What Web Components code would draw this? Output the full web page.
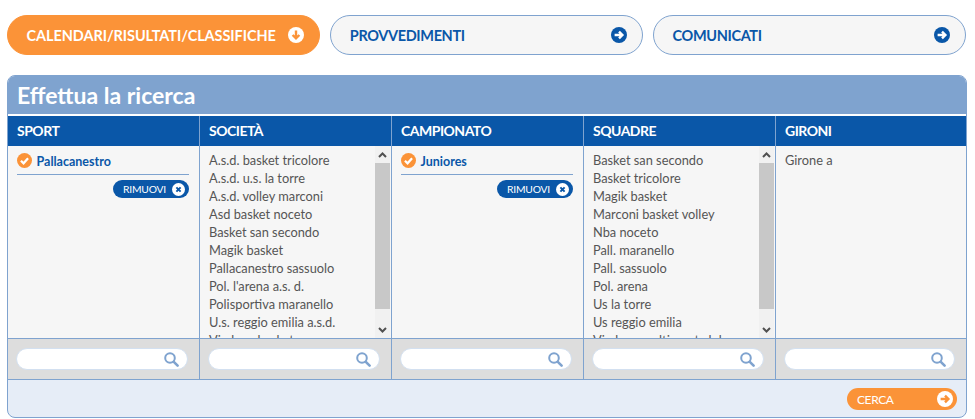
<!DOCTYPE html>
<html lang="it">
<head>
<meta charset="utf-8">
<title>Effettua la ricerca</title>
<style>
	html, body { margin: 0; background: #fff; }
	body { font-family: "Lato", "Open Sans", sans-serif; width: 975px; height: 419px; overflow: hidden; }
</style>
</head>
<body>
	<app-page>
		<nav-pill active label="CALENDARI/RISULTATI/CLASSIFICHE"></nav-pill>
		<nav-pill label="PROVVEDIMENTI"></nav-pill>
		<nav-pill label="COMUNICATI"></nav-pill>

		<search-panel slot="panel" heading="Effettua la ricerca">
			<filter-column label="SPORT">
				<picked-item label="Pallacanestro"></picked-item>
			</filter-column>
			<filter-column label="SOCIETÀ">
				<scroll-list items="A.s.d. basket tricolore|A.s.d. u.s. la torre|A.s.d. volley marconi|Asd basket noceto|Basket san secondo|Magik basket|Pallacanestro sassuolo|Pol. l'arena a.s. d.|Polisportiva maranello|U.s. reggio emilia a.s.d.|Viadana basket"></scroll-list>
			</filter-column>
			<filter-column label="CAMPIONATO">
				<picked-item label="Juniores"></picked-item>
			</filter-column>
			<filter-column label="SQUADRE">
				<scroll-list items="Basket san secondo|Basket tricolore|Magik basket|Marconi basket volley|Nba noceto|Pall. maranello|Pall. sassuolo|Pol. arena|Us la torre|Us reggio emilia|Viadana multisport club"></scroll-list>
			</filter-column>
			<filter-column label="GIRONI">
				<plain-list items="Girone a"></plain-list>
			</filter-column>
		</search-panel>
	</app-page>

<script>
// shared round icons, a disc with the glyph on top in the other colour
const ICONS = {
	down  : '<path d="M8 3.4v8M4.6 8 8 11.4 11.4 8" />',
	right : '<path d="M3.6 8h8M8 4.6 11.4 8 8 11.4" />',
	check : '<path d="M4.2 8.2 7 11l4.8-5.4" />',
	close : '<path d="M5.4 5.4l5.2 5.2M10.6 5.4l-5.2 5.2" />'
}

class RoundIcon extends HTMLElement {
	connectedCallback() {
		const size = this.getAttribute('size') || 16
		const disc = this.getAttribute('disc') || '#fff'
		const mark = this.getAttribute('mark') || '#0a57a8'
		const name = this.getAttribute('name')
		this.attachShadow({ mode: 'open' })
		this.shadowRoot.innerHTML = `
			<style>
				:host { display: block; width: ${size}px; height: ${size}px; flex: none; }
				svg { display: block; }
			</style>
			<svg width="${size}" height="${size}" viewBox="0 0 16 16">
				<circle cx="8" cy="8" r="8" fill="${disc}"/>
				<g fill="none" stroke="${mark}" stroke-width="2.4">${ICONS[name]}</g>
			</svg>
		`
	}
}
customElements.define('round-icon', RoundIcon)

class AppPage extends HTMLElement {
	constructor() {
		super()
		this.attachShadow({ mode: 'open' })
		this.shadowRoot.innerHTML = `
			<style>
				:host { display: block; padding: 15px 8px 0 7px; }
				.nav { display: grid; grid-template-columns: 313px 312.5px 313px; column-gap: 10.25px; margin-bottom: 20px; }
			</style>
			<div class="nav"><slot></slot></div>
			<slot name="panel"></slot>
		`
	}
}
customElements.define('app-page', AppPage)

class NavPill extends HTMLElement {
	connectedCallback() {
		const active = this.hasAttribute('active')
		this.attachShadow({ mode: 'open' })
		this.shadowRoot.innerHTML = `
			<style>
				:host {
					display: flex; align-items: center; justify-content: space-between; box-sizing: border-box;
					height: 40px; border-radius: 20px; padding: 0 15px 0 18.5px;
					border: 1px solid #7fa3cf; background: #f6f6f6; color: #0a57a8;
					font-size: 14.5px; font-weight: 700; letter-spacing: -.35px;
				}
				:host([active]) { background: #fb9338; border-color: #fb9338; color: #fff; letter-spacing: -.08px; }
			</style>
			<span>${this.getAttribute('label')}</span>
			<round-icon name="${active ? 'down' : 'right'}" disc="${active ? '#fff' : '#0a57a8'}" mark="${active ? '#fb9338' : '#fff'}"></round-icon>
		`
	}
}
customElements.define('nav-pill', NavPill)

class SearchPanel extends HTMLElement {
	connectedCallback() {
		this.attachShadow({ mode: 'open' })
		this.shadowRoot.innerHTML = `
			<style>
				:host { display: flex; flex-direction: column; box-sizing: border-box; width: 960px; height: 343px; border: 1px solid #7fa3cf; border-radius: 8px; overflow: hidden; background: #e6edf7; }
				h2 { margin: 0; height: 38px; line-height: 39px; padding-left: 9px; background: #7fa3cf; border-bottom: 2px solid #fff; color: #fff; font-size: 23px; font-weight: 700; }
				.cols { display: grid; grid-template-columns: repeat(4, 192px) 1fr; border-bottom: 1px solid #7fa3cf; }
				.foot { flex: 1; display: flex; align-items: center; justify-content: flex-end; padding: 1px 9px 0 0; }
			</style>
			<h2>${this.getAttribute('heading')}</h2>
			<div class="cols"><slot></slot></div>
			<div class="foot"><cerca-button></cerca-button></div>
		`
	}
}
customElements.define('search-panel', SearchPanel)

class FilterColumn extends HTMLElement {
	connectedCallback() {
		this.attachShadow({ mode: 'open' })
		this.shadowRoot.innerHTML = `
			<style>
				:host { display: flex; flex-direction: column; min-width: 0; border-right: 1px solid #7fa3cf; }
				:host(:last-child) { border-right: 0; }
				.head { height: 30px; line-height: 29px; padding-left: 9px; background: #0a57a8; color: #fff; font-size: 14px; font-weight: 700; letter-spacing: -.5px; }
				.body { height: 192px; background: #f6f6f6; overflow: hidden; }
				.find { height: 41px; box-sizing: border-box; border-top: 1px solid #7fa3cf; background: #ddd; padding: 9px 11px 0 8px; }
			</style>
			<div class="head">${this.getAttribute('label')}</div>
			<div class="body"><slot></slot></div>
			<div class="find"><search-box></search-box></div>
		`
	}
}
customElements.define('filter-column', FilterColumn)

class PickedItem extends HTMLElement {
	connectedCallback() {
		this.attachShadow({ mode: 'open' })
		this.shadowRoot.innerHTML = `
			<style>
				:host { display: block; padding: 7px 10px 0 9px; }
				.row { display: flex; align-items: center; gap: 4.5px; box-sizing: border-box; height: 22px; padding-bottom: 6px; border-bottom: 1px solid #7fa3cf; color: #0a57a8; font-size: 12.5px; font-weight: 700; }
				.row span { padding-top: 2px; }
				.remove { display: flex; justify-content: flex-end; margin-top: 5px; }
				.pill { display: flex; align-items: center; justify-content: space-between; box-sizing: border-box; width: 76px; height: 18px; border-radius: 9px; padding: 0 4px 0 10px; background: #0a57a8; color: #fff; font-size: 10.3px; letter-spacing: -.2px; }
			</style>
			<div class="row">
				<round-icon name="check" size="15" disc="#fb9338" mark="#fff"></round-icon>
				<span>${this.getAttribute('label')}</span>
			</div>
			<div class="remove">
				<div class="pill"><span>RIMUOVI</span><round-icon name="close" size="13" disc="#fff" mark="#0a57a8"></round-icon></div>
			</div>
		`
	}
}
customElements.define('picked-item', PickedItem)

class PlainList extends HTMLElement {
	connectedCallback() {
		const rows = this.getAttribute('items').split('|').map(t => `<li>${t}</li>`).join('')
		this.attachShadow({ mode: 'open' })
		this.shadowRoot.innerHTML = `
			<style>
				:host { display: block; }
				ul { list-style: none; margin: 0; padding: 5px 0 4px 9px; color: #555; font-size: 12.8px; line-height: 18px; }
				li { white-space: nowrap; }
			</style>
			<ul>${rows}</ul>
		`
	}
}
customElements.define('plain-list', PlainList)

// the browser hides real scrollbars when photographing, so this one is drawn
class ListScrollbar extends HTMLElement {
	constructor() {
		super()
		this.attachShadow({ mode: 'open' })
		this.shadowRoot.innerHTML = `
			<style>
				:host { display: flex; flex-direction: column; flex: none; width: 15px; margin-right: 1px; background: #f1f1f1; }
				.btn { height: 17px; display: flex; align-items: center; justify-content: center; }
				.thumb { height: 146px; background: #c8c8c8; }
				.rest { flex: 1; }
				svg { display: block; }
			</style>
			<div class="btn"><svg width="9" height="6"><path d="M1 5l3.500-3.500L8 5" fill="none" stroke="#505050" stroke-width="2"/></svg></div>
			<div class="thumb"></div>
			<div class="rest"></div>
			<div class="btn"><svg width="9" height="6"><path d="M1 1l3.500 3.500L8 1" fill="none" stroke="#505050" stroke-width="2"/></svg></div>
		`
	}
}
customElements.define('list-scrollbar', ListScrollbar)

class ScrollList extends HTMLElement {
	connectedCallback() {
		const rows = this.getAttribute('items').split('|').map(t => `<li>${t}</li>`).join('')
		this.attachShadow({ mode: 'open' })
		this.shadowRoot.innerHTML = `
			<style>
				:host { display: flex; height: 192px; }
				.scroll { flex: 1; min-width: 0; overflow: hidden; }
				ul { list-style: none; margin: 0; padding: 5px 0 4px 9px; color: #555; font-size: 12.8px; line-height: 18px; }
				li { white-space: nowrap; }
			</style>
			<div class="scroll"><ul>${rows}</ul></div>
			<list-scrollbar></list-scrollbar>
		`
	}
}
customElements.define('scroll-list', ScrollList)

class SearchBox extends HTMLElement {
	constructor() {
		super()
		this.attachShadow({ mode: 'open' })
		this.shadowRoot.innerHTML = `
			<style>
				:host { display: flex; align-items: center; justify-content: flex-end; box-sizing: border-box; height: 22px; border: 1px solid #d3e0f0; border-radius: 11px; background: #fff; padding-right: 8px; }
				svg { display: block; }
			</style>
			<svg width="15" height="15" viewBox="0 0 15 15">
				<circle cx="6" cy="6" r="4.800" fill="none" stroke="#7fa3cf" stroke-width="2"/>
				<path d="M9.800 9.800 13.600 13.600" stroke="#7fa3cf" stroke-width="2.600" stroke-linecap="round"/>
			</svg>
		`
	}
}
customElements.define('search-box', SearchBox)

class CercaButton extends HTMLElement {
	constructor() {
		super()
		this.attachShadow({ mode: 'open' })
		this.shadowRoot.innerHTML = `
			<style>
				:host { display: flex; align-items: center; justify-content: space-between; box-sizing: border-box; width: 110px; height: 22px; border-radius: 11px; padding: 0 4px 0 10px; background: #fb9338; color: #fff; font-size: 12px; letter-spacing: -.4px; }
			</style>
			<span>CERCA</span>
			<round-icon name="right" disc="#fff" mark="#fb9338"></round-icon>
		`
	}
}
customElements.define('cerca-button', CercaButton)
</script>
</body>
</html>
